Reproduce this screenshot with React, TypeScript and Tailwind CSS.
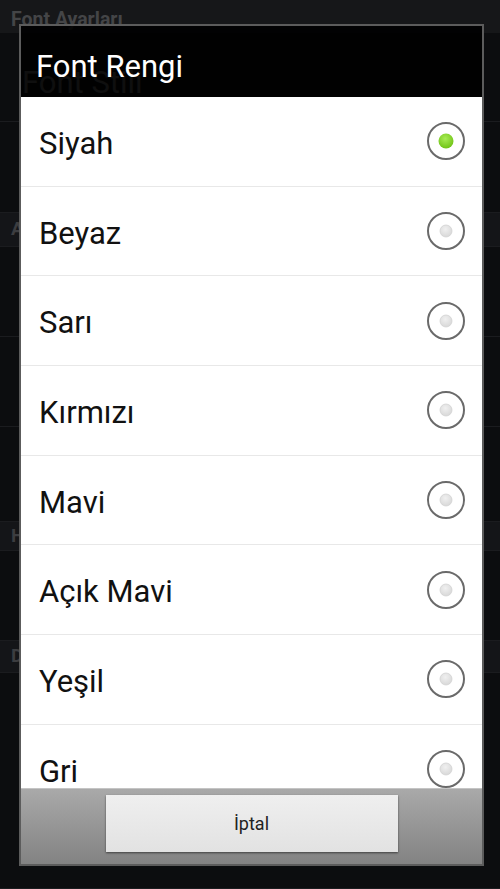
const colors = ['Siyah', 'Beyaz', 'Sarı', 'Kırmızı', 'Mavi', 'Açık Mavi', 'Yeşil', 'Gri']

function Radio({ checked }: { checked: boolean }) {
  return (
    <svg width="40" height="40" viewBox="0 0 40 40">
      <defs>
        <radialGradient id="green" cx="45%" cy="35%" r="70%">
          <stop offset="0%" stopColor="#a8ec55" />
          <stop offset="100%" stopColor="#6cc012" />
        </radialGradient>
        <radialGradient id="grey" cx="45%" cy="35%" r="70%">
          <stop offset="0%" stopColor="#f0f0f0" />
          <stop offset="100%" stopColor="#d6d6d6" />
        </radialGradient>
      </defs>
      <circle cx="20" cy="20" r="18" fill="#fff" stroke="#6a6a6a" strokeWidth="2" />
      {checked ? (
        <circle cx="20" cy="20" r="7.5" fill="url(#green)" />
      ) : (
        <circle cx="20" cy="20" r="6" fill="url(#grey)" stroke="#d2d2d2" strokeWidth="0.8" />
      )}
    </svg>
  )
}

function BgRow({ h, text }: { h: string; text?: string }) {
  return (
    <div className={`${h} border-b border-[#1b1c1f] flex items-center pl-[22px] pt-[12px]`}>
      {text && <span className="text-[31px] text-[#7a7a7a]">{text}</span>}
    </div>
  )
}

function BgBand({ h, label }: { h: string; label: string }) {
  return (
    <div className={`${h} bg-[#141518] border-b border-[#1b1c1f] flex items-center pl-[11px]`}>
      <span className="text-[19px] font-bold text-[#3c3d40]">{label}</span>
    </div>
  )
}

export default function App() {
  return (
    <div className="relative w-[500px] h-[889px] overflow-hidden bg-[#0c0d0f] font-['Roboto','Liberation_Sans',sans-serif]">
      {/* dimmed preference screen behind the dialog */}
      <div className="flex flex-col">
        <div className="h-[33px] bg-[#161719] flex items-center pl-[11px] pt-[6px]">
          <span className="text-[19.5px] font-bold text-[#444547]">Font Ayarları</span>
        </div>
        <BgRow h="h-[89px]" text="Font Stili" />
        <BgRow h="h-[91px]" />
        <BgBand h="h-[34px]" label="Arka Plan" />
        <BgRow h="h-[90px]" />
        <BgRow h="h-[90px]" />
        <BgRow h="h-[95px]" />
        <BgBand h="h-[29px]" label="Hız" />
        <BgRow h="h-[90px]" />
        <BgBand h="h-[32px]" label="Diğer" />
        <BgRow h="h-[216px]" />
      </div>

      {/* dialog */}
      <div className="absolute left-[19px] top-[24px] w-[465px] h-[842px] border-2 border-[#5c5c5c] flex flex-col">
        <div className="h-[71px] shrink-0 bg-[rgba(0,0,0,0.88)] flex items-center pl-[15px] pt-[10px]">
          <span className="text-[31px] text-white leading-none">Font Rengi</span>
        </div>
        <div className="flex-1 bg-white overflow-hidden">
          {colors.map((c, i) => (
            <div
              key={c}
              className="h-[89.7px] border-b border-[#e8e8e8] flex items-center justify-between pl-[18px] pr-[16px]"
            >
              <span className="text-[31px] text-[#111] leading-none pt-[4px]">{c}</span>
              <Radio checked={i === 0} />
            </div>
          ))}
        </div>
        <div className="h-[76px] shrink-0 bg-gradient-to-b from-[#a9a9a9] to-[#838383] border-t border-[#c4c4c4] flex justify-center pt-[6px]">
          <button className="w-[292px] h-[57px] bg-gradient-to-b from-[#efefef] to-[#e2e2e2] shadow-[0_1px_2px_rgba(0,0,0,0.55)] text-[18px] text-[#222]">
            İptal
          </button>
        </div>
      </div>
    </div>
  )
}
